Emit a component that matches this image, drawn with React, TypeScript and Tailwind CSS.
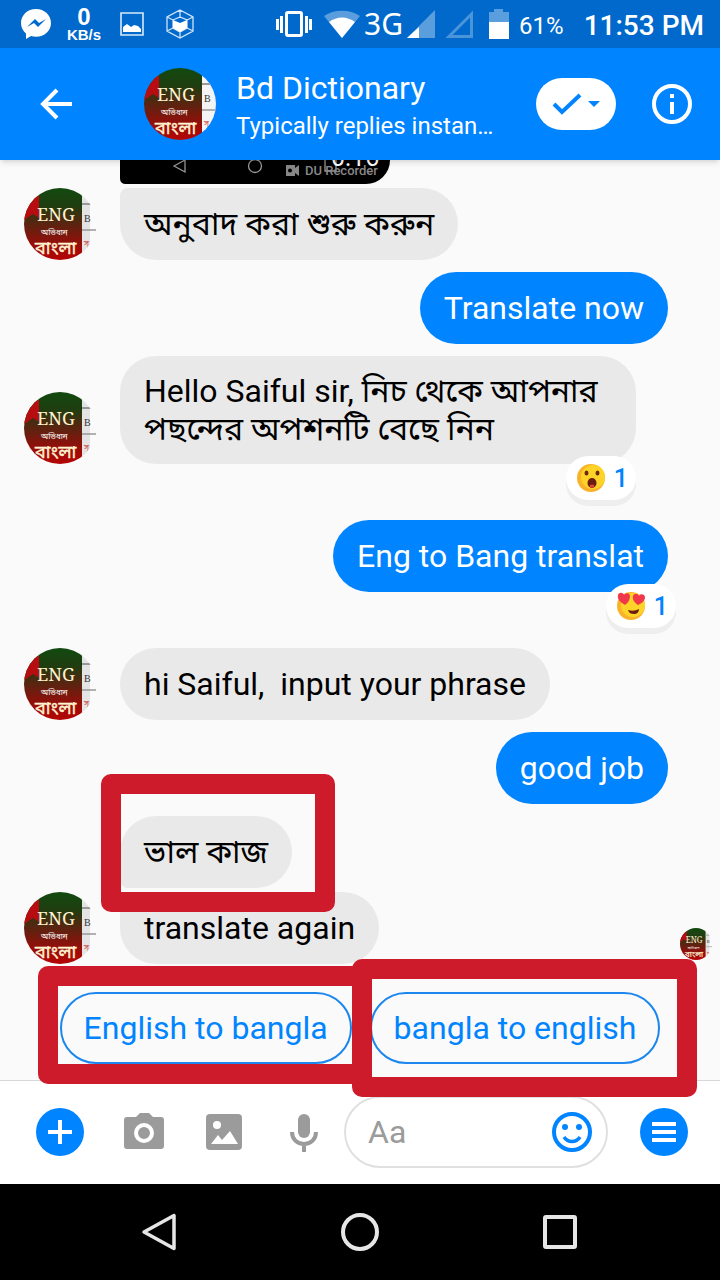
import React from 'react';
import clsx from 'clsx';

const Avatar = ({ className, inHeader = false }: { className: string; inHeader?: boolean }) => {
  const id = React.useId();

  return (
    <svg viewBox="0 0 72 72" className={clsx('shrink-0 overflow-visible', className)} role="img" aria-label="Bd Dictionary">
      <defs>
        <linearGradient id={`${id}g`} x1="0" y1="0" x2="0" y2="1">
          <stop offset="0" stopColor="#124a10" />
          <stop offset="0.25" stopColor="#1f3d10" />
          <stop offset="0.5" stopColor="#5a2410" />
          <stop offset="0.8" stopColor="#9a0c0a" />
          <stop offset="1" stopColor="#b50505" />
        </linearGradient>
        <clipPath id={`${id}c`}>
          <circle cx="36" cy="36" r="36" />
        </clipPath>
      </defs>
      <g clipPath={`url(#${id}c)`}>
        <rect width="58" height="72" fill={`url(#${id}g)`} />
        <path d="M0 8h15v22l-6-4-9 6z" fill="#b80d10" />
        <rect x="58" width={inHeader ? 14 : 8} height="72" fill={inHeader ? '#f4f4f4' : '#e4e4e4'} />
        <path d="M58 16h14" stroke="#999" strokeWidth="2" />
        <text x="13" y="33" fontSize="18" fill="#fff3d0" fontFamily="'Noto Serif', 'Liberation Serif', serif">ENG</text>
        <text x="17" y="47" fontSize="8" fill="#fff" fontFamily="'Noto Sans Bengali', 'Noto Sans', sans-serif">অভিধান</text>
        <text x="11" y="66" fontSize="18" fill="#fff3d0" stroke="#fff3d0" strokeWidth="0.4" fontFamily="'Noto Sans Bengali', 'Noto Sans', sans-serif">বাংলা</text>
        <text x="60" y="34" fontSize="10" fill="#333" fontFamily="'Liberation Serif', serif">B</text>
        <text x="60" y="58" fontSize="8" fill="#c33" fontFamily="'Noto Sans Bengali', sans-serif">স্</text>
      </g>
      <path d={inHeader ? 'M58 42h13' : 'M58 42h14'} stroke="#999" strokeWidth="1.5" />
    </svg>
  );
};

const Frame = ({ className }: { className: string }) => (
  <div className={clsx('pointer-events-none absolute z-20 rounded-[10px] border-[20px] border-[#ce1b2b]', className)} />
);

const StatusBar = () => (
  <div className="flex h-12 items-center justify-between bg-[#0069cb] pl-5 pr-4 text-white">
    <div className="flex items-center">
      <svg viewBox="0 0 32 32" className="size-8">
        <path d="M16 1C7.500 1 1 7.200 1 15c0 4.500 2 8 5 10.500V31l5-3c1.600.5 3.200.7 5 .7 8.500 0 15-6 15-13.700S24.500 1 16 1z" fill="#fff" />
        <path d="M7 19l8-8 4 4 7-4-8 8-4-4z" fill="#0069cb" />
      </svg>
      <div className="ml-3 flex w-10 flex-col items-center font-bold">
        <span className="font-[Liberation_Sans] text-[24px] leading-[22px]">0</span>
        <span className="font-[Liberation_Sans] text-[15px] leading-[14px]">KB/s</span>
      </div>
      <svg viewBox="0 0 24 24" className="ml-4 size-6">
        <path d="M1 1h22v22H1z" fill="none" stroke="#d8e9fa" strokeWidth="1.600" />
        <path d="M3 20v-5l4-3 4 3 3-2 4 1 3 3v3z" fill="#fff" />
      </svg>
      <svg viewBox="0 0 30 32" className="ml-5 h-8 w-8" fill="none" stroke="#cfe3f8" strokeWidth="1.300">
        <path d="M15 2l13 7v14l-13 7-13-7V9zM15 2v8M2 9l6 3M28 9l-6 3M2 23l6-3M28 23l-6-3M15 30v-6M8 12l7-3 7 3v8l-7 4-7-4z" />
        <path d="M8 12l7 3 7-3v8l-7 4-7-4z" fill="#fff" stroke="none" />
      </svg>
    </div>
    <div className="flex items-center">
      <svg viewBox="0 0 36 28" className="h-7 w-9" fill="#fff">
        <path d="M0 9h3v11H0zM4 6h3v17H4zM29 6h3v17h-3zM33 9h3v11h-3z" />
        <rect x="10.500" y="2.500" width="15" height="23" rx="1.500" fill="none" stroke="#fff" strokeWidth="3" />
      </svg>
      <svg viewBox="0 0 36 28" className="ml-3 h-7 w-9">
        <path d="M0 6C10-1 26-1 36 6L18 28z" fill="#5a9edd" />
        <path d="M5 12c8-6 18-6 26 0L18 28z" fill="#fff" />
      </svg>
      <span className="ml-1 mr-1 font-['Noto_Sans'] text-[30px] leading-9">3G</span>
      <svg viewBox="0 0 28 28" className="size-7">
        <path d="M28 0v28H0z" fill="#5a9edd" />
        <path d="M12 17v11H0z" fill="#fff" />
      </svg>
      <svg viewBox="0 0 28 28" className="ml-2.5 size-7">
        <path d="M26.500 4v22.500H4z" fill="none" stroke="#4a94da" strokeWidth="3" />
      </svg>
      <svg viewBox="0 0 20 30" className="ml-4 h-[30px] w-5">
        <path d="M5 0h9v3h6v11H0V3h5z" fill="#5a9edd" />
        <path d="M0 13h20v17H0z" fill="#fff" />
      </svg>
      <span className="ml-2.5 mt-1 text-[24px]">61%</span>
      <span className="ml-5 mt-1 text-[28px] font-medium">11:53 PM</span>
    </div>
  </div>
);

const Header = () => (
  <header className="relative z-10 flex h-28 items-center bg-[#0084ff] pl-10 pr-7 text-white shadow-md">
    <button aria-label="Back" className="size-8">
      <svg viewBox="0 0 32 32" className="size-8" fill="none" stroke="#fff" strokeWidth="4">
        <path d="M32 16H4M17 2L3 16l14 14" />
      </svg>
    </button>
    <Avatar inHeader className="ml-18 size-18" />
    <div className="ml-5 min-w-0 flex-1 pt-1">
      <h1 className="truncate text-[32px] leading-10">Bd Dictionary</h1>
      <p className="truncate text-[24px] leading-9">Typically replies instan…</p>
    </div>
    <button aria-label="Mark as done" className="flex h-[52px] w-20 items-center justify-center rounded-full bg-white">
      <svg viewBox="0 0 48 24" className="h-6 w-12">
        <path d="M2 12l8 8L28 3" fill="none" stroke="#0084ff" strokeWidth="4" />
        <path d="M36 9h12l-6 6z" fill="#0084ff" />
      </svg>
    </button>
    <button aria-label="Conversation info" className="ml-9 size-10">
      <svg viewBox="0 0 40 40" className="size-10">
        <circle cx="20" cy="20" r="18" fill="none" stroke="#fff" strokeWidth="4" />
        <path d="M18 10h4v4h-4zM18 18h4v12h-4z" fill="#fff" />
      </svg>
    </button>
  </header>
);

const VideoStrip = () => (
  <div className="ml-30 h-6 w-[270px] overflow-hidden rounded-bl-lg rounded-br-[36px] bg-black">
    <svg viewBox="0 0 270 24" className="h-6 w-[270px]" fill="none" stroke="#999" strokeWidth="1.300">
      <path d="M54 6l11-6v12z" />
      <circle cx="135" cy="6" r="6.500" />
      <path d="M205 0v11h11V0" />
      <path d="M166 5h9v3l4-3v11l-4-3v3h-9z" fill="#888" stroke="none" />
      <circle cx="170" cy="10.500" r="2" fill="#000" stroke="none" />
      <text x="211" y="6" fontSize="25" fill="#fff" stroke="none">0:16</text>
      <text x="185" y="15" fontSize="13" fontWeight="500" fill="#888" stroke="none">DU Recorder</text>
    </svg>
  </div>
);

const WowFace = () => (
  <svg viewBox="0 0 28 28" className="size-7" role="img" aria-label="Wow">
    <circle cx="14" cy="14" r="14" fill="#f9b32a" />
    <circle cx="16" cy="13" r="12" fill="#fdd327" />
    <ellipse cx="9.500" cy="9" rx="2" ry="2.500" fill="#6b2a10" />
    <ellipse cx="20.500" cy="9" rx="2" ry="2.500" fill="#6b2a10" />
    <ellipse cx="15" cy="19" rx="4.500" ry="5" fill="#6b1d10" />
    <ellipse cx="15" cy="22" rx="2.500" ry="1.500" fill="#e0453a" />
  </svg>
);

const LoveFace = () => (
  <svg viewBox="0 0 28 28" className="size-7" role="img" aria-label="Love">
    <circle cx="14" cy="14" r="14" fill="#f9b32a" />
    <circle cx="16" cy="13" r="12" fill="#fdd327" />
    <path d="M8 13C3 10 0 7 1 3c1-3 5-3 6 0 2-3 6-2 6 1 0 4-2 7-5 9z" fill="#f0384a" />
    <path d="M21 13c-3-2-6-5-5-9 1-3 5-3 6 0 1-3 6-2 6 1 0 4-3 6-7 8z" fill="#f0384a" />
    <path d="M11 18c4 1 7 1 11-1 0 3-2 5-5 5s-5-1-6-4z" fill="#6b1d10" />
  </svg>
);

const Reaction = ({ children, className }: { children: React.ReactNode; className: string }) => (
  <button
    className={clsx(
      'absolute -bottom-9 flex h-11 w-[70px] items-center justify-between rounded-full bg-white pl-[11px] pr-2 text-[25px] font-medium text-[#0084ff] shadow-[0_6px_0_#eeeeee]',
      className
    )}
  >
    {children}
    <span className="pt-0.5">1</span>
  </button>
);

type MessageProps = {
  children: React.ReactNode;
  sent?: boolean;
  avatar?: boolean;
  corner?: string;
  className?: string;
  overlay?: React.ReactNode;
  seen?: boolean;
};

const Message = ({ children, sent, avatar, corner = 'rounded-[36px]', className, overlay, seen }: MessageProps) => (
  <div className={clsx('flex items-end gap-6 pl-6', sent ? 'justify-end pr-[52px]' : 'pr-2', className)}>
    {!sent && (avatar ? <Avatar className="size-18" /> : <div className="w-18 shrink-0" />)}
    <div
      className={clsx(
        'relative flex min-h-18 max-w-[516px] items-center whitespace-pre-wrap px-6 py-4 text-[32px] leading-[38px]',
        corner,
        sent ? 'bg-[#0084ff] text-white' : 'bg-[#e9e9e9] text-black'
      )}
    >
      <p>{children}</p>
      {overlay}
    </div>
    {seen && <Avatar className="mb-1 ml-auto size-8" />}
  </div>
);

const chip = 'h-18 w-full whitespace-nowrap rounded-full border-2 border-[#1b86ee] px-[22px] text-[32px] text-[#0084ff]';

const Composer = () => (
  <footer className="flex items-center border-t border-[#d8d8d8] bg-white pb-4 pl-9 pr-8 pt-[15px]">
    <button aria-label="More actions" className="size-12 shrink-0">
      <svg viewBox="0 0 48 48">
        <circle cx="24" cy="24" r="24" fill="#0084ff" />
        <path d="M24 12v24M12 24h24" stroke="#fff" strokeWidth="4" />
      </svg>
    </button>
    <button aria-label="Camera" className="ml-10 size-10 shrink-0">
      <svg viewBox="0 0 40 40">
        <path d="M3 5h9l4-4h9l4 4h8a3 3 0 0 1 3 3v26a3 3 0 0 1-3 3H3a3 3 0 0 1-3-3V8a3 3 0 0 1 3-3z" fill="#9b9b9b" />
        <circle cx="20" cy="21" r="8" fill="none" stroke="#fff" strokeWidth="4" />
      </svg>
    </button>
    <button aria-label="Photos" className="ml-10 size-10 shrink-0">
      <svg viewBox="0 0 40 40">
        <rect x="2" y="2" width="36" height="36" rx="4" fill="#9b9b9b" />
        <circle cx="13" cy="13" r="4" fill="#fff" />
        <path d="M7 32l7-9 4 5 8-9 8 13z" fill="#fff" />
      </svg>
    </button>
    <button aria-label="Voice message" className="ml-10 size-10 shrink-0">
      <svg viewBox="0 0 40 40">
        <rect x="14" y="2" width="12" height="24" rx="6" fill="#9b9b9b" />
        <path d="M8 20c0 7 5 12 12 12s12-5 12-12M20 32v8" fill="none" stroke="#9b9b9b" strokeWidth="4" />
      </svg>
    </button>
    <div className="ml-5 flex h-18 min-w-0 flex-1 items-center rounded-full border-2 border-[#e0e0e0] pl-[22px] pr-3.5">
      <input aria-label="Message" placeholder="Aa" className="min-w-0 flex-1 bg-transparent text-[32px] outline-none placeholder:text-[#9b9b9b]" />
      <button aria-label="Emoji" className="size-10 shrink-0">
        <svg viewBox="0 0 40 40" fill="#0084ff">
          <circle cx="20" cy="20" r="18" fill="none" stroke="#0084ff" strokeWidth="4" />
          <circle cx="13" cy="15" r="3" />
          <circle cx="27" cy="15" r="3" />
          <path d="M12 25c4 6 12 6 16 0" fill="none" stroke="#0084ff" strokeWidth="3.500" />
        </svg>
      </button>
    </div>
    <button aria-label="Menu" className="ml-8 size-12 shrink-0">
      <svg viewBox="0 0 48 48">
        <circle cx="24" cy="24" r="24" fill="#0084ff" />
        <path d="M12 16h24M12 24h24M12 32h24" stroke="#fff" strokeWidth="4" />
      </svg>
    </button>
  </footer>
);

const NavBar = () => (
  <nav className="grid h-24 grid-cols-3 items-center justify-items-center bg-black px-15">
    <button aria-label="Back">
      <svg viewBox="0 0 40 40" className="size-10" fill="none" stroke="#e6e6e6" strokeWidth="3.500">
        <path d="M34 3.500v33L4 20z" strokeLinejoin="round" />
      </svg>
    </button>
    <button aria-label="Home">
      <svg viewBox="0 0 40 40" className="size-10" fill="none" stroke="#e6e6e6" strokeWidth="4">
        <circle cx="20" cy="20" r="17" />
      </svg>
    </button>
    <button aria-label="Recent apps">
      <svg viewBox="0 0 40 40" className="size-10" fill="none" stroke="#e6e6e6" strokeWidth="4">
        <rect x="5" y="5" width="30" height="30" rx="1" />
      </svg>
    </button>
  </nav>
);

const App = () => (
  <div className="flex min-h-screen flex-col bg-[#fafafa] font-[Roboto,'Noto_Sans_Bengali','Noto_Sans',sans-serif]">
    <StatusBar />
    <Header />
    <main className="flex flex-1 flex-col">
      <VideoStrip />
      <Message avatar className="mt-1" corner="rounded-[36px] rounded-tl-lg">অনুবাদ করা শুরু করুন</Message>
      <Message sent className="mt-3">Translate now</Message>
      <Message avatar className="mt-3" overlay={<Reaction className="right-0"><WowFace /></Reaction>}>
        Hello Saiful sir, নিচ থেকে আপনার পছন্দের অপশনটি বেছে নিন
      </Message>
      <Message sent className="mt-14" overlay={<Reaction className="-right-2"><LoveFace /></Reaction>}>
        Eng to Bang translat
      </Message>
      <Message avatar className="mt-14">{'hi Saiful,  input your phrase'}</Message>
      <Message sent className="mt-3">good job</Message>
      <Message
        className="mt-3"
        corner="rounded-[36px] rounded-bl-lg"
        overlay={<Frame className="-bottom-6 -left-[19px] -right-[43px] -top-[42px]" />}
      >
        ভাল কাজ
      </Message>
      <Message avatar seen className="mt-1" corner="rounded-[36px] rounded-tl-lg">translate again</Message>
      <div className="mb-4 mt-7 flex justify-center gap-[18px]">
        <div className="relative">
          <button className={chip}>English to bangla</button>
          <Frame className="-bottom-5 -left-[22px] -right-5 -top-[26px]" />
        </div>
        <div className="relative">
          <button className={chip}>bangla to english</button>
          <Frame className="-bottom-[33px] -left-[18px] -right-[37px] -top-[33px]" />
        </div>
      </div>
    </main>
    <Composer />
    <NavBar />
  </div>
);

export default App;
